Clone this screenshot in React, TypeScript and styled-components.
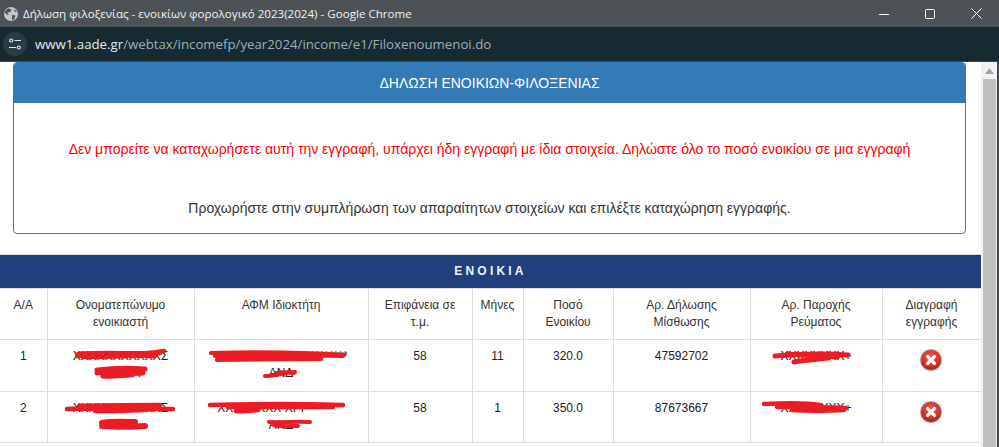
import React from "react";
import styled, { createGlobalStyle } from "styled-components";

const Global = createGlobalStyle`
  html, body { margin: 0; padding: 0; width: 999px; height: 447px; overflow: hidden; background: #fff; }
`;
const Win = styled.div`
  width: 999px; height: 447px; display: flex; flex-direction: column; overflow: hidden;
  font-family: "Liberation Sans", Arial, sans-serif; color: #333;
`;
const TitleBar = styled.div`
  height: 27px; flex: none; background: #4d5257; display: flex; align-items: center;
  padding-left: 3px; color: #f1f2f3; font: 11.6px/27px "Open Sans", "Noto Sans", sans-serif;
`;
const Title = styled.span` margin-left: 4px; flex: 1; white-space: nowrap; `;
const WinButtons = styled.div` display: flex; align-items: center; `;
const WinButton = styled.div` width: 46px; height: 27px; display: flex; align-items: center; justify-content: center; `;
const AddressBar = styled.div`
  height: 35px; flex: none; background: #172931; display: flex; align-items: center;
  padding-left: 3px; border-bottom: 1px solid #3c464c; box-sizing: border-box;
`;
const SiteChip = styled.div`
  width: 24px; height: 24px; border-radius: 50%; background: #2c3c44; display: flex;
  align-items: center; justify-content: center;
`;
const Url = styled.div`
  margin-left: 8px; font: 13.24px "Open Sans", "Noto Sans", sans-serif; color: #9fb0b8; white-space: nowrap;
`;
const Host = styled.span` color: #e6ecef; `;
const Main = styled.div` flex: 1; display: flex; min-height: 0; `;
const Page = styled.div` width: 981px; flex: none; background: #fff; overflow: hidden; `;
const Panel = styled.section`
  margin: 0 15px 20px 13px; height: 172px; box-sizing: border-box;
  border: 1px solid #337ab7; border-radius: 4px; overflow: hidden; display: flex; flex-direction: column;
`;
const PanelHead = styled.h3`
  margin: 0; height: 40px; flex: none; background: #337ab7; color: #fff; text-align: center;
  font-size: 14px; font-weight: 400; line-height: 40px;
`;
const PanelBody = styled.div` flex: 1; text-align: center; font-size: 14px; `;
const ErrorText = styled.p` margin: 38px 0 0; color: #ff0000; line-height: 17px; `;
const InfoText = styled.p` margin: 42px 0 0; color: #333; line-height: 17px; `;
const Band = styled.div`
  height: 33px; background: #213f7a; color: #eef2f8; text-align: center; font-size: 12px; font-weight: 700;
  letter-spacing: 3.2px; line-height: 33px; border-top: 1px solid #ddd;
`;
const Table = styled.table`
  border-collapse: collapse; table-layout: fixed; width: 981px; font-size: 12px; line-height: 17px; text-align: center;
  border-top: 1px solid #ddd;
`;
const Th = styled.th`
  font-weight: 400; vertical-align: top; padding: 8px 6px; height: 34px; border: 1px solid #ddd;
  &:first-child { border-left: 0; }
`;
const Row = styled.tr<{ $tall?: boolean }>`
  & > td { height: ${(p) => (p.$tall ? 35 : 34)}px; }
`;
const Td = styled.td`
  position: relative; vertical-align: top; padding: 8px 6px; border: 1px solid #ddd; color: #222;
  &:first-child { border-left: 0; }
`;
const Scribble = styled.svg<{ $x: number; $y: number }>`
  position: absolute; left: ${(p) => p.$x}px; top: ${(p) => p.$y}px; overflow: visible;
`;
const DeleteBtn = styled.svg` display: block; margin: 0 auto; position: relative; top: 1px; left: -1px; `;
const Scrollbar = styled.div`
  width: 16px; flex: none; background: #f1f1f1; display: flex; flex-direction: column; align-items: center;
`;
const Arrow = styled.div`
  height: 17px; flex: none; display: flex; align-items: center; justify-content: center;
`;
const Thumb = styled.div` flex: 1; width: 13px; background: #c1c1c1; `;
const WinEdge = styled.div` width: 2px; flex: none; background: #41484d; `;

const RED = "#ed1c24";

function Mark({ x, y, w, h, d, sw = 4 }: { x: number; y: number; w: number; h: number; d: string; sw?: number }) {
  return (
    <Scribble $x={x} $y={y} width={w} height={h} viewBox={`0 0 ${w} ${h}`} fill="none" stroke={RED} strokeWidth={sw} strokeLinecap="round" strokeLinejoin="round">
      <path d={d} />
    </Scribble>
  );
}

function Delete() {
  return (
    <DeleteBtn width="22" height="22" viewBox="0 0 22 22">
      <rect width="22" height="22" fill="#f5f3f3" />
      <circle cx="11" cy="11" r="10.8" fill="#9a9a9a" />
      <circle cx="11" cy="11" r="10" fill="url(#deleteFill)" />
      <path d="M7.6 7.6 14.4 14.4M14.4 7.6 7.6 14.4" stroke="#fff" strokeWidth="3.4" strokeLinecap="round" />
    </DeleteBtn>
  );
}

const cols = [47, 147, 174, 104, 51, 90, 137, 132, 99];
const heads = ["Α/Α", "Ονοματεπώνυμο ενοικιαστή", "ΑΦΜ Ιδιοκτήτη", "Επιφάνεια σε τ.μ.", "Μήνες", "Ποσό Ενοικίου", "Αρ. Δήλωσης Μίσθωσης", "Αρ. Παροχής Ρεύματος", "Διαγραφή εγγραφής"];

export default function App() {
  return (
    <Win>
      <Global />
      <svg width="0" height="0" style={{ position: "absolute" }}>
        <defs>
          <radialGradient id="deleteFill" cx="50%" cy="35%" r="70%">
            <stop offset="0%" stopColor="#ee5a4c" />
            <stop offset="65%" stopColor="#d62f26" />
            <stop offset="100%" stopColor="#8f1a14" />
          </radialGradient>
        </defs>
      </svg>
      <TitleBar>
        <svg width="16" height="16" viewBox="0 0 16 16">
          <circle cx="8" cy="8" r="7" fill="#c3c6c9" />
          <path d="M5 2.2 8.5 3.5 7.5 6 4.5 6.5 5.5 9 3 8 1.5 6ZM9 9l3.5.5L11 13.5 9 14ZM11 3l3 2.5-2 .5Z" fill="#4d5257" />
        </svg>
        <Title>Δήλωση φιλοξενίας - ενοικίων φορολογικό 2023(2024) - Google Chrome</Title>
        <WinButtons>
          <WinButton>
            <svg width="10" height="10" viewBox="0 0 10 10"><path d="M0 5.5h10" stroke="#fff" strokeWidth="1" /></svg>
          </WinButton>
          <WinButton>
            <svg width="10" height="10" viewBox="0 0 10 10"><rect x=".5" y=".5" width="9" height="9" rx="1" fill="none" stroke="#fff" strokeWidth="1" /></svg>
          </WinButton>
          <WinButton>
            <svg width="11" height="11" viewBox="0 0 11 11"><path d="M.5.5l10 10M10.5.5l-10 10" stroke="#fff" strokeWidth="1" /></svg>
          </WinButton>
        </WinButtons>
      </TitleBar>
      <AddressBar>
        <SiteChip>
          <svg width="14" height="14" viewBox="0 0 14 14" fill="none" stroke="#dfe5e8" strokeWidth="1.2">
            <circle cx="3.2" cy="3.5" r="1.5" />
            <path d="M6.5 3.5H13M1 10.5h7" />
            <circle cx="10.8" cy="10.5" r="1.5" />
          </svg>
        </SiteChip>
        <Url><Host>www1.aade.gr</Host>/webtax/incomefp/year2024/income/e1/Filoxenoumenoi.do</Url>
      </AddressBar>
      <Main>
        <Page>
          <Panel>
            <PanelHead>ΔΗΛΩΣΗ ΕΝΟΙΚΙΩΝ-ΦΙΛΟΞΕΝΙΑΣ</PanelHead>
            <PanelBody>
              <ErrorText>Δεν μπορείτε να καταχωρήσετε αυτή την εγγραφή, υπάρχει ήδη εγγραφή με ίδια στοιχεία. Δηλώστε όλο το ποσό ενοικίου σε μια εγγραφή</ErrorText>
              <InfoText>Προχωρήστε στην συμπλήρωση των απαραίτητων στοιχείων και επιλέξτε καταχώρηση εγγραφής.</InfoText>
            </PanelBody>
          </Panel>
          <Band>ΕΝΟΙΚΙΑ</Band>
          <Table>
            <colgroup>
              {cols.map((w, i) => <col key={i} width={w} />)}
            </colgroup>
            <thead>
              <tr>{heads.map((h) => <Th key={h}>{h}</Th>)}</tr>
            </thead>
            <tbody>
              <Row $tall>
                <Td>1</Td>
                <Td>
                  ΧΧΧΧΧΧΧΧΧΧΧΣ<br />ΧΧΧΧΧ
                  <Mark x={27} y={8} w={92} h={12} sw={4.5} d="M3 6C25 4 55 6 85 5M2 8C30 6 60 8 89 3M8 9C40 9 60 7 80 8" />
                  <Mark x={45} y={25} w={56} h={15} sw={5} d="M4 5C20 3 40 3 52 4M4 8C20 6 35 9 50 8M10 11C20 12 30 10 38 10" />
                </Td>
                <Td>
                  ΧΧΧΧΧΧΧΧ ΧΡ **********<br />ΑΝΔ
                  <Mark x={14} y={9} w={138} h={13} sw={4.2} d="M2 4C40 3 90 3 135 6M6 7C50 6 100 6 134 7M8 11C50 10 80 10 112 10" />
                  <Mark x={67} y={28} w={36} h={10} sw={4} d="M3 8C12 8 18 5 33 4M14 5C20 4 26 4 32 5" />
                </Td>
                <Td>58</Td>
                <Td>11</Td>
                <Td>320.0</Td>
                <Td>47592702</Td>
                <Td>
                  ΧΧΧΧΧΧΧΧ+
                  <Mark x={21} y={9} w={80} h={17} sw={5} d="M3 7C25 5 50 4 76 6M15 5C35 7 50 6 65 8M22 13C35 11 40 11 56 9" />
                </Td>
                <Td><Delete /></Td>
              </Row>
              <Row>
                <Td>2</Td>
                <Td>
                  ΧΧΧΧΧΧΧΧΧΧΧΣ<br />ΧΧΧΧ
                  <Mark x={17} y={9} w={110} h={13} sw={4.5} d="M2 8C30 7 80 8 108 8M14 5C40 4 70 4 95 4M30 10C50 10 70 10 88 8" />
                  <Mark x={49} y={26} w={54} h={12} sw={6} d="M5 5C15 3 30 4 38 4M5 8C20 9 35 9 48 8" />
                </Td>
                <Td>
                  ΧΧΧΧΧΧΧΧ ΧΡΙ ********<br />ΑΝΔ
                  <Mark x={13} y={9} w={140} h={13} sw={4.5} d="M2 4C40 3 100 3 135 4M20 6C60 6 100 6 125 6M28 10C35 11 40 10 50 9" />
                  <Mark x={71} y={27} w={46} h={10} sw={4} d="M3 3C15 4 30 2 44 3M8 6C15 8 25 7 32 7" />
                </Td>
                <Td>58</Td>
                <Td>1</Td>
                <Td>350.0</Td>
                <Td>87673667</Td>
                <Td>
                  ΧΧΧΧΧΧΧΧ+
                  <Mark x={11} y={8} w={86} h={14} sw={4.5} d="M2 4C20 3 40 2 58 5M15 7C40 6 60 7 84 8M30 10C50 11 65 11 82 10" />
                </Td>
                <Td><Delete /></Td>
              </Row>
            </tbody>
          </Table>
        </Page>
        <Scrollbar>
          <Arrow>
            <svg width="9" height="6" viewBox="0 0 9 6"><path d="M4.5 0 9 6H0Z" fill="#a3a3a3" /></svg>
          </Arrow>
          <Thumb />
        </Scrollbar>
        <WinEdge />
      </Main>
    </Win>
  );
}
